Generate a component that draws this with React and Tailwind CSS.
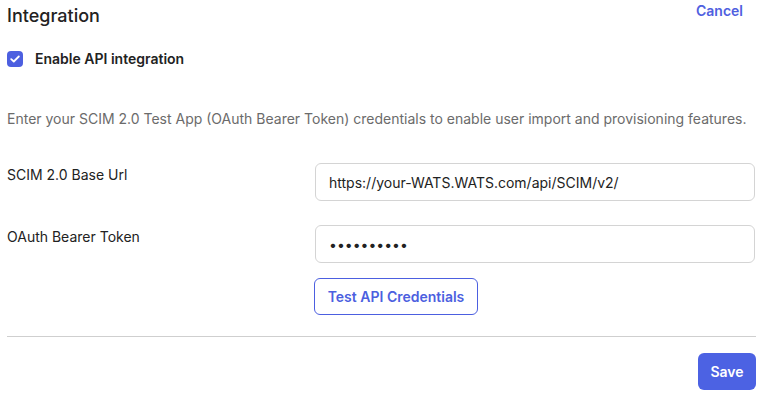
import React, { useState } from 'react';

export default function App() {
  const [enabled, setEnabled] = useState(true);

  return (
    <div className="w-[772px] h-[408px] bg-white px-[7px] text-[#1f1f1f]" style={{ fontFamily: 'Inter, "Noto Sans", sans-serif' }}>
      {/* Header */}
      <div className="flex items-start justify-between pt-[3px]">
        <h1 className="text-[18px] leading-[26px] font-medium text-[#222]">Integration</h1>
        <button className="-mt-[2px] mr-[22px] text-[14px] leading-[20px] font-semibold text-[#4f5fe0]">Cancel</button>
      </div>

      {/* Enable toggle */}
      <label className="mt-[20px] flex items-center gap-[12px] cursor-pointer" onClick={() => setEnabled(!enabled)}>
        <span className={`flex h-[16px] w-[16px] shrink-0 items-center justify-center rounded-[4px] ${enabled ? 'bg-[#4c5fe0]' : 'border border-gray-400'}`}>
          {enabled && (
            <svg width="10" height="8" viewBox="0 0 10 8" fill="none">
              <path d="M1.2 4.1 3.8 6.5 8.8 1.5" stroke="white" strokeWidth="1.8" strokeLinecap="round" strokeLinejoin="round" />
            </svg>
          )}
        </span>
        <span className="text-[14px] leading-[20px] font-semibold text-[#222]">Enable API integration</span>
      </label>

      {/* Description */}
      <p className="mt-[40px] text-[14px] leading-[20px] text-[#6b6b6b]">
        Enter your SCIM 2.0 Test App (OAuth Bearer Token) credentials to enable user import and provisioning features.
      </p>

      {/* Fields */}
      <div className="mt-[34px] grid grid-cols-[308px_440px] gap-y-[24px]">
        <div className="pt-[2px] text-[14px] leading-[20px] text-[#222]">SCIM 2.0 Base Url</div>
        <input
          defaultValue="https://your-WATS.WATS.com/api/SCIM/v2/"
          className="h-[38px] w-[440px] rounded-[6px] border border-[#d4d4d4] px-[13px] text-[14px] text-[#222] outline-none"
        />
        <div className="pt-[2px] text-[14px] leading-[20px] text-[#222]">OAuth Bearer Token</div>
        <input
          type="password"
          defaultValue="abcdefghij"
          className="h-[38px] w-[440px] rounded-[6px] border border-[#d4d4d4] px-[13px] text-[14px] text-[#222] outline-none"
        />
        <div />
        <div className="-mt-[9px]">
          <button className="h-[37px] w-[164px] -ml-[1px] rounded-[6px] border border-[#4c5fe0] text-[14px] font-semibold text-[#4c5fe0]">
            Test API Credentials
          </button>
        </div>
      </div>

      <div className="mt-[21px] h-px w-[749px] bg-[#cfcfcf]" />

      <div className="flex justify-end pr-[9px] pt-[16px]">
        <button className="h-[37px] w-[58px] rounded-[6px] bg-[#4c62e3] text-[14px] font-semibold text-white">Save</button>
      </div>
    </div>
  );
}
